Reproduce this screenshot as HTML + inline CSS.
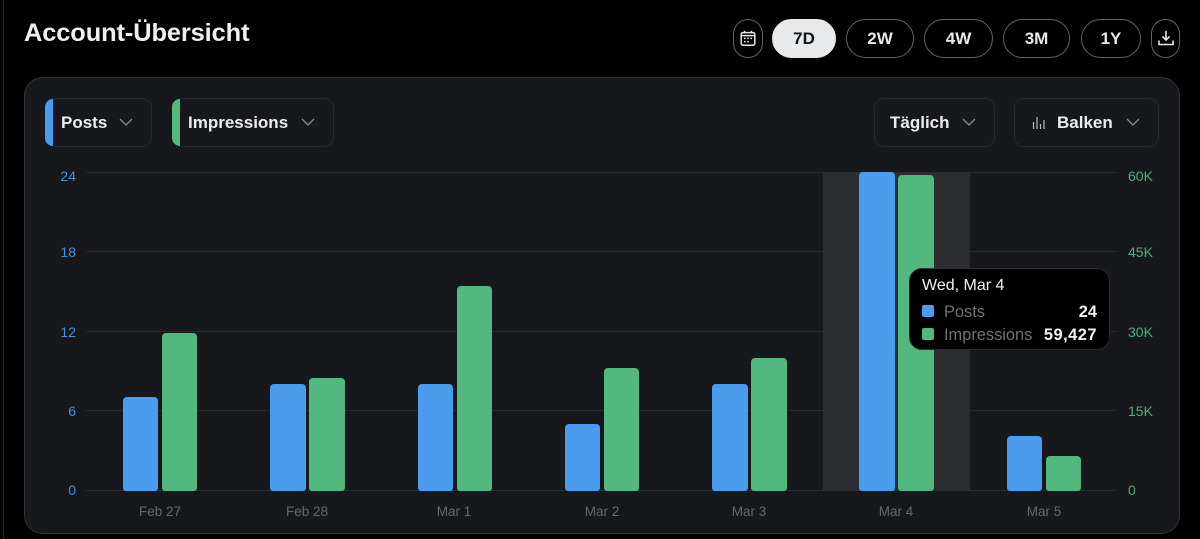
<!DOCTYPE html>
<html><head><meta charset="utf-8">
<style>
html,body{margin:0;padding:0;background:#000}
body{width:1200px;height:539px;position:relative;overflow:hidden;font-family:"Liberation Sans",sans-serif;color:#e7e9ea}
#w{position:absolute;left:0;top:0;width:1200px;height:539px;filter:blur(.35px)}
.a{position:absolute}
.pill{position:absolute;top:18.5px;height:39px;box-sizing:border-box;border:1px solid #606468;border-radius:20px;color:#e7e9ea;font-weight:700;font-size:17px;line-height:37px;text-align:center}
.sel{position:absolute;top:98px;height:49px;box-sizing:border-box;border:1px solid #26282b;border-radius:10px;background:#17181b;font-weight:700;font-size:17px;line-height:47px;color:#eceded}
.sel span{position:absolute;top:0;white-space:nowrap}
.sel svg{position:absolute;top:18px}
.stripe{position:absolute;left:-1px;top:0;width:8px;height:47px;border-radius:9px 0 0 9px}
.g{position:absolute;left:86px;width:1031px;height:1px;background:#292b2e}
.l,.r,.x{position:absolute;font-size:14px;line-height:16px;white-space:nowrap}
.l{color:#4a8fdb;right:1124px}
.r{color:#4fae79;left:1128px}
.x{color:#65686c;top:504px;width:80px;text-align:center;font-size:13.5px}
.b,.n{position:absolute;width:35.5px;border-radius:4px 4px 3px 3px}
.b{background:#4b9bee}.n{background:#52b87f}
.t{position:absolute;font-size:16.4px;line-height:20px;white-space:nowrap}
</style></head><body><div id="w">
<div class="a" style="left:3px;top:0;width:1px;height:539px;background:#26282a"></div>
<div class="a" style="left:24px;top:17px;font-size:25.4px;line-height:32px;font-weight:700;color:#eff0f0;letter-spacing:-.1px;white-space:nowrap">Account-Übersicht</div>

<div class="pill" style="left:733px;width:30px"><svg width="16" height="17" viewBox="0 0 16 17" style="position:absolute;left:6px;top:10px" fill="none" stroke="#e7e9ea" stroke-width="1.5"><rect x="1.2" y="2.6" width="13.6" height="12.6" rx="1.6"/><path d="M1.2 5.6h13.6M4.5 .8v2.4M11.5 .8v2.4"/><path d="M4 8.4h1.6M7.2 8.4h1.6M10.4 8.4h1.6M4 11.6h1.6M7.2 11.6h1.6" stroke-width="1.5"/></svg></div>
<div class="pill" style="left:772px;width:64px;background:#e7e9ea;border-color:#e7e9ea;color:#0f1419">7D</div>
<div class="pill" style="left:846px;width:68px">2W</div>
<div class="pill" style="left:924px;width:69px">4W</div>
<div class="pill" style="left:1003px;width:67px">3M</div>
<div class="pill" style="left:1081px;width:60px">1Y</div>
<div class="pill" style="left:1151px;width:29px"><svg width="16" height="16" viewBox="0 0 16 16" style="position:absolute;left:6px;top:10px" fill="none" stroke="#e7e9ea" stroke-width="1.6"><path d="M8 .8v9M4.4 6.4 8 10l3.6-3.6M1 10.5v4h14v-4"/></svg></div>

<div class="a" style="left:24px;top:77px;width:1156px;height:457px;box-sizing:border-box;background:#17181b;border:1px solid #333538;border-radius:19px"></div>

<div class="sel" style="left:45px;width:107px"><div class="stripe" style="background:#4b9bee"></div><span style="left:15px">Posts</span><svg width="14" height="10" viewBox="0 0 14 10" style="left:73px" fill="none" stroke="#8a8d91" stroke-width="1.3"><path d="M1 2l6 6 6-6"/></svg></div>
<div class="sel" style="left:172px;width:162px"><div class="stripe" style="background:#52b87f"></div><span style="left:15px">Impressions</span><svg width="14" height="10" viewBox="0 0 14 10" style="left:128px" fill="none" stroke="#8a8d91" stroke-width="1.3"><path d="M1 2l6 6 6-6"/></svg></div>
<div class="sel" style="left:874px;width:121px"><span style="left:15px">Täglich</span><svg width="14" height="10" viewBox="0 0 14 10" style="left:87px" fill="none" stroke="#8a8d91" stroke-width="1.3"><path d="M1 2l6 6 6-6"/></svg></div>
<div class="sel" style="left:1014px;width:145px"><svg width="14" height="14" viewBox="0 0 14 14" style="left:17px;top:17px" fill="none" stroke="#b5b7ba" stroke-width="1.2"><path d="M1.5 6v7M5 1v12M8.5 8v5M12 4v9"/></svg><span style="left:42px">Balken</span><svg width="14" height="10" viewBox="0 0 14 10" style="left:111px" fill="none" stroke="#8a8d91" stroke-width="1.3"><path d="M1 2l6 6 6-6"/></svg></div>

<div class="g" style="top:172px"></div>
<div class="g" style="top:251px"></div>
<div class="g" style="top:331px"></div>
<div class="g" style="top:410px"></div>
<div class="g" style="top:490px"></div>

<div class="l" style="top:168px">24</div>
<div class="l" style="top:244px">18</div>
<div class="l" style="top:324px">12</div>
<div class="l" style="top:403px">6</div>
<div class="l" style="top:482px">0</div>
<div class="r" style="top:168px">60K</div>
<div class="r" style="top:244px">45K</div>
<div class="r" style="top:324px">30K</div>
<div class="r" style="top:403px">15K</div>
<div class="r" style="top:482px">0</div>

<div class="a" style="left:823px;top:172px;width:147px;height:318px;background:#2c2d30"></div>

<div class="b" style="left:122.5px;top:397px;height:94px"></div>
<div class="n" style="left:161.5px;top:333px;height:158px"></div>
<div class="b" style="left:270px;top:384px;height:107px"></div>
<div class="n" style="left:309px;top:378px;height:113px"></div>
<div class="b" style="left:417.5px;top:384px;height:107px"></div>
<div class="n" style="left:456.5px;top:285.5px;height:205.5px"></div>
<div class="b" style="left:564.5px;top:423.5px;height:67.5px"></div>
<div class="n" style="left:603.5px;top:368px;height:123px"></div>
<div class="b" style="left:712px;top:384px;height:107px"></div>
<div class="n" style="left:751px;top:357.5px;height:133.5px"></div>
<div class="b" style="left:859px;top:172px;height:319px"></div>
<div class="n" style="left:898px;top:175px;height:316px"></div>
<div class="b" style="left:1006.5px;top:436px;height:55px"></div>
<div class="n" style="left:1045.5px;top:456px;height:35px"></div>

<div class="x" style="left:120px">Feb 27</div>
<div class="x" style="left:267px">Feb 28</div>
<div class="x" style="left:414px">Mar 1</div>
<div class="x" style="left:562px">Mar 2</div>
<div class="x" style="left:709px">Mar 3</div>
<div class="x" style="left:856px">Mar 4</div>
<div class="x" style="left:1004px">Mar 5</div>

<div class="a" style="left:909px;top:268px;width:201px;height:82px;box-sizing:border-box;background:#000;border:1px solid #2a2b2e;border-radius:13px"></div>
<div class="t" style="left:922px;top:276px;color:#f2f3f3;font-size:16px">Wed, Mar 4</div>
<div class="a" style="left:922px;top:305px;width:12px;height:12px;border-radius:2px;background:#4b9bee"></div>
<div class="a" style="left:922px;top:328px;width:12px;height:12px;border-radius:2px;background:#52b87f"></div>
<div class="t" style="left:944px;top:302px;color:#6f7276">Posts</div>
<div class="t" style="left:944px;top:325px;color:#6f7276">Impressions</div>
<div class="t" style="right:103px;top:302px;font-weight:700;color:#f2f3f3">24</div>
<div class="t" style="right:103px;top:325px;font-weight:700;color:#f2f3f3;letter-spacing:.5px">59,427</div>
</div></body></html>
